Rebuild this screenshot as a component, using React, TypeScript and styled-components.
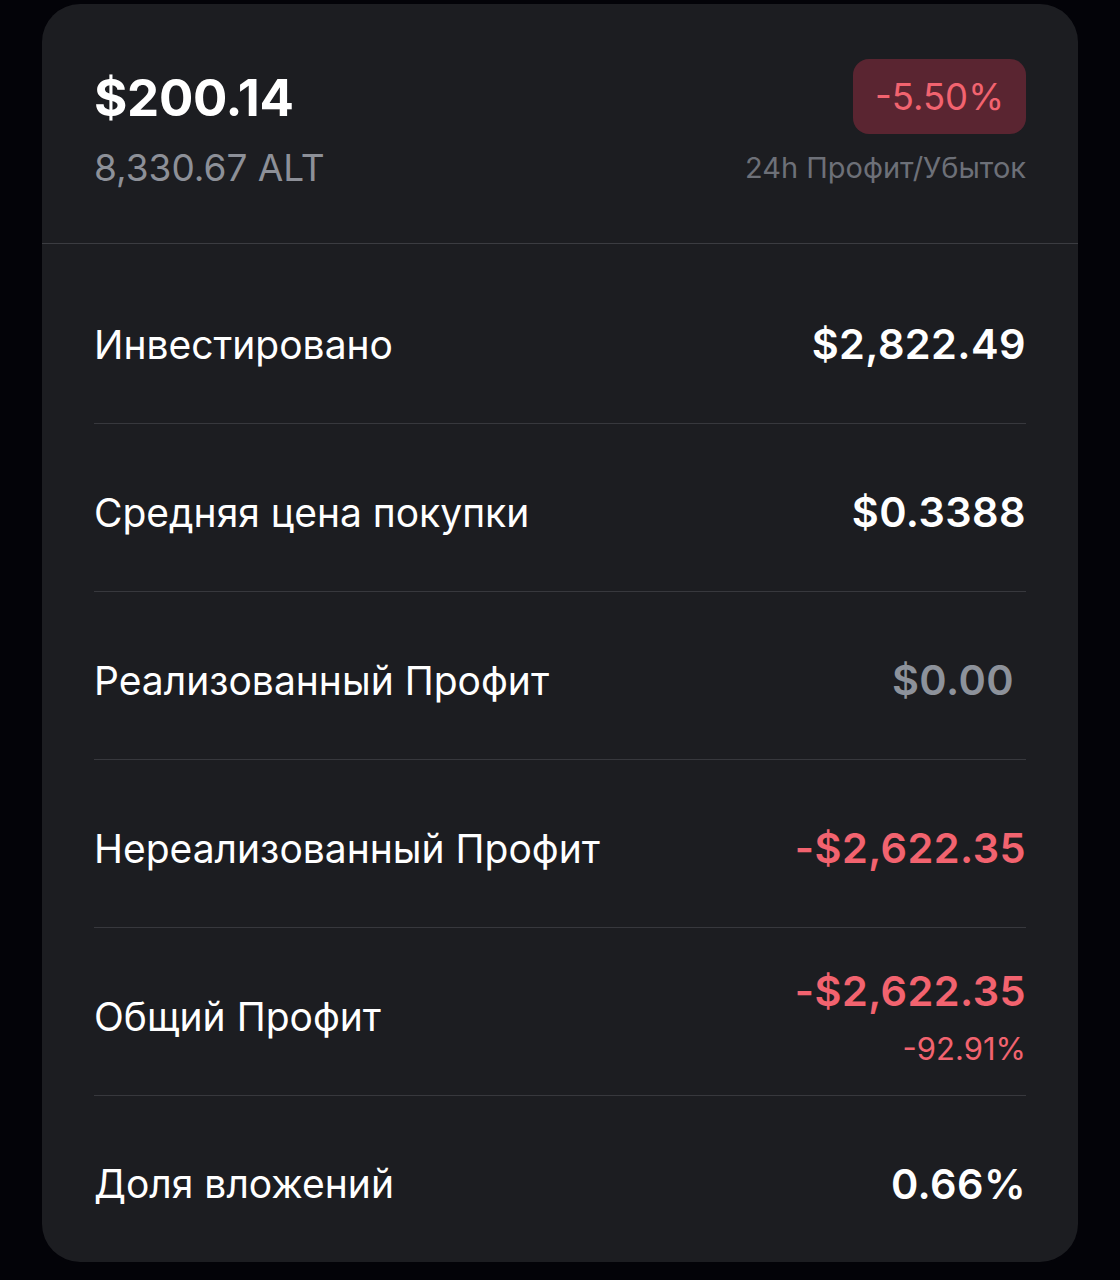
import React from "react";
import styled, { createGlobalStyle } from "styled-components";

const Global = createGlobalStyle`
  html, body { margin: 0; padding: 0; background: #030308; }
  body { font-family: Inter, "Noto Sans", "Liberation Sans", sans-serif; -webkit-font-smoothing: antialiased; }
`;

const Page = styled.div`
  width: 1120px;
  min-height: 1280px;
  padding: 4px 42px 0;
  box-sizing: border-box;
  background: #030308;
`;

const Card = styled.div`
  background: #1c1d21;
  border-radius: 38px;
  overflow: hidden;
`;

const Header = styled.div`
  height: 240px;
  box-sizing: border-box;
  padding: 0 52px;
  border-bottom: 1px solid #3b3c41;
  display: flex;
  justify-content: space-between;
  align-items: flex-start;
`;

const HeadCol = styled.div<{ $right?: boolean }>`
  display: flex;
  flex-direction: column;
  align-items: ${(p) => (p.$right ? "flex-end" : "flex-start")};
  padding-top: ${(p) => (p.$right ? "55px" : "65px")};
`;

const Balance = styled.div`
  color: #ffffff;
  font-size: 51px;
  font-weight: 700;
  line-height: 58px;
  letter-spacing: -0.3px;
`;

const Amount = styled.div`
  color: #8d9098;
  font-size: 37px;
  font-weight: 400;
  line-height: 44px;
  margin-top: 19px;
`;

const Badge = styled.div`
  background: #5a2531;
  color: #f2636f;
  font-size: 36.5px;
  font-weight: 400;
  height: 75px;
  padding: 0 22px;
  border-radius: 16px;
  display: flex;
  align-items: center;
  justify-content: center;
`;

const Caption = styled.div`
  color: #6d7078;
  font-size: 29px;
  line-height: 36px;
  margin-top: 16px;
`;

const List = styled.div`
  padding: 12px 52px 0;
`;

const Row = styled.div<{ $last?: boolean }>`
  height: ${(p) => (p.$last ? "157px" : "158px")};
  padding-top: 9px;
  display: flex;
  align-items: center;
  justify-content: space-between;
  border-bottom: ${(p) => (p.$last ? "none" : "1px solid #37383d")};
`;

const Label = styled.div`
  color: #ffffff;
  font-size: 39px;
  font-weight: 400;
`;

const ValueCol = styled.div`
  display: flex;
  flex-direction: column;
  align-items: flex-end;
`;

const Value = styled.div<{ $tone?: "white" | "gray" | "red"; $pad?: number }>`
  font-size: 41.5px;
  font-weight: 600;
  letter-spacing: 0.4px;
  padding-right: ${(p) => p.$pad ?? 0}px;
  color: ${(p) =>
    p.$tone === "red" ? "#f2636f" : p.$tone === "gray" ? "#8d929b" : "#ffffff"};
`;

const SubValue = styled.div`
  color: #f2636f;
  font-size: 31px;
  font-weight: 400;
  margin-top: 14px;
`;

const rows: { label: string; value: string; tone?: "white" | "gray" | "red"; sub?: string; pad?: number }[] = [
  { label: "Инвестировано", value: "$2,822.49" },
  { label: "Средняя цена покупки", value: "$0.3388" },
  { label: "Реализованный Профит", value: "$0.00", tone: "gray", pad: 12 },
  { label: "Нереализованный Профит", value: "-$2,622.35", tone: "red" },
  { label: "Общий Профит", value: "-$2,622.35", tone: "red", sub: "-92.91%" },
  { label: "Доля вложений", value: "0.66%" },
];

export default function App() {
  return (
    <Page>
      <Global />
      <Card>
        <Header>
          <HeadCol>
            <Balance>$200.14</Balance>
            <Amount>8,330.67 ALT</Amount>
          </HeadCol>
          <HeadCol $right>
            <Badge>-5.50%</Badge>
            <Caption>24h Профит/Убыток</Caption>
          </HeadCol>
        </Header>
        <List>
          {rows.map((r, i) => (
            <Row key={i} $last={i === rows.length - 1}>
              <Label>{r.label}</Label>
              <ValueCol>
                <Value $tone={r.tone} $pad={r.pad}>{r.value}</Value>
                {r.sub && <SubValue>{r.sub}</SubValue>}
              </ValueCol>
            </Row>
          ))}
        </List>
      </Card>
    </Page>
  );
}
